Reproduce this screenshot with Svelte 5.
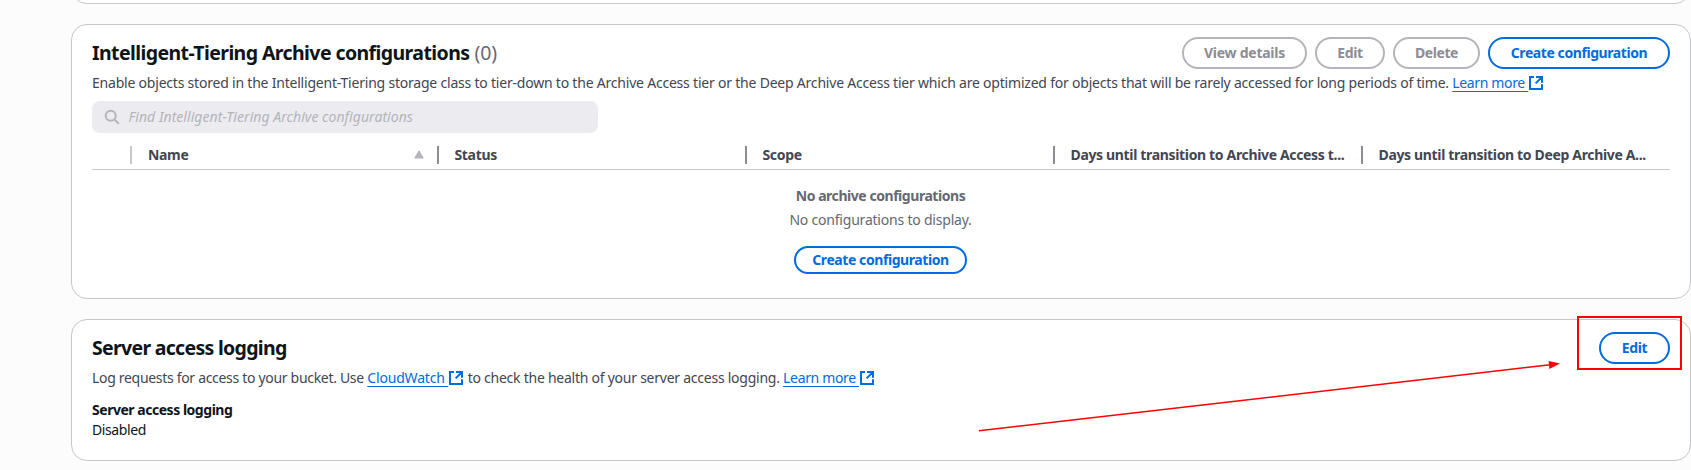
<script>
  const columns = [
    { label: 'Name', sorted: true },
    { label: 'Status' },
    { label: 'Scope' },
    { label: 'Days until transition to Archive Access t...' },
    { label: 'Days until transition to Deep Archive A...' }
  ];
</script>

{#snippet link(label, kind)}
  <a href="#top" class={kind}><span class="link-text">{label}&nbsp;</span><svg class="external" viewBox="0 0 16 16" aria-hidden="true"><path d="M8 2h6v5.7M14 2 7.6 8.4M14 9.3V14H2V2h4" /></svg></a>
{/snippet}

<main>
  <section class="card previous"></section>

  <section class="card tiering">
    <header>
      <h2><span class="title">Intelligent-Tiering Archive configurations</span> <span class="count">(0)</span></h2>
      <div class="actions">
        <button class="details" disabled>View details</button>
        <button class="edit-off" disabled>Edit</button>
        <button class="delete" disabled>Delete</button>
        <button class="create">Create configuration</button>
      </div>
    </header>
    <p class="description">Enable objects stored in the Intelligent-Tiering storage class to tier-down to the Archive Access tier or the Deep Archive Access tier which are optimized for objects that will be rarely accessed for long periods of time. {@render link('Learn more', 'learn')}</p>

    <div class="search">
      <svg viewBox="0 0 16 16" aria-hidden="true"><circle cx="6.7" cy="6.7" r="5" /><path d="m10.5 10.5 4.3 4.3" /></svg>
      <span>Find Intelligent-Tiering Archive configurations</span>
    </div>

    <div class="table-head">
      <div class="select"></div>
      {#each columns as column}
        <div class="column">
          <span>{column.label}</span>
          {#if column.sorted}
            <svg viewBox="0 0 10 9" aria-hidden="true"><path d="M5 .8 9.2 8H.8Z" /></svg>
          {/if}
        </div>
      {/each}
    </div>

    <div class="empty">
      <strong>No archive configurations</strong>
      <p>No configurations to display.</p>
      <button class="small">Create configuration</button>
    </div>
  </section>

  <section class="card logging">
    <header>
      <h2 class="logging-title">Server access logging</h2>
      <div class="actions"><button class="edit">Edit</button></div>
    </header>
    <p class="description"><span class="log">Log requests for access to your bucket. Use</span> {@render link('CloudWatch', 'watch')} <span class="check">to check the health of your server access logging.</span> {@render link('Learn more', 'learn')}</p>
    <dl>
      <dt>Server access logging</dt>
      <dd>Disabled</dd>
    </dl>
  </section>

  <svg class="annotation" viewBox="0 0 1691 470" aria-hidden="true">
    <rect x="1578" y="317" width="103" height="52" />
    <path class="line" d="M979 430.8 1550 364.8" />
    <path class="tip" d="M1560 363.6 1549.4 369 1548.6 361Z" />
  </svg>
</main>

<style>
  :global(body) {
    background: #fcfcfd;
  }
  main {
    position: relative;
    box-sizing: border-box;
    height: 470px;
    padding-left: 71px;
    overflow: hidden;
    display: flex;
    flex-direction: column;
    gap: 20px;
    font: 14px/20px "Noto Sans", "Open Sans", sans-serif;
    letter-spacing: -0.21px;
    color: #0f141a;
  }
  .card {
    box-sizing: border-box;
    flex: none;
    border: 1px solid #c6c6cd;
    border-radius: 16px;
    background: #fff;
    padding: 12px 20px 0;
  }
  .previous {
    height: 40px;
    margin-top: -36px;
  }
  .tiering {
    height: 275px;
  }
  .logging {
    height: 142px;
  }
  header {
    display: flex;
    justify-content: space-between;
    height: 32px;
  }
  h2 {
    margin: 3px 0 0;
    font-size: 19.5px;
    line-height: 25px;
    font-weight: 700;
    letter-spacing: -0.59px;
    white-space: nowrap;
  }
  .logging-title {
    letter-spacing: -0.7px;
  }
  .count {
    color: #656871;
    font-weight: 400;
    letter-spacing: -0.1px;
    margin-left: 0.5px;
  }
  .actions {
    display: flex;
    gap: 8px;
  }
  button {
    box-sizing: border-box;
    height: 32px;
    padding: 0;
    border: 2px solid #006ce0;
    border-radius: 20px;
    background: #fff;
    color: #006ce0;
    font: 700 14px/20px "Noto Sans", "Open Sans", sans-serif;
    letter-spacing: -0.42px;
    white-space: nowrap;
  }
  button:disabled {
    border-color: #b4b4bb;
    color: #8c8c94;
  }
  .details {
    width: 125px;
    letter-spacing: -0.25px;
  }
  .edit-off {
    width: 70px;
    letter-spacing: -0.3px;
  }
  .delete {
    width: 87px;
  }
  .create {
    width: 182px;
  }
  .edit {
    width: 71px;
    letter-spacing: -0.3px;
  }
  .small {
    width: 173px;
    height: 28px;
    margin-top: 16px;
  }
  p {
    margin: 0;
  }
  .description {
    margin-top: 4px;
    height: 20px;
    color: #424650;
    white-space: nowrap;
  }
  .log {
    letter-spacing: -0.31px;
  }
  .check {
    letter-spacing: -0.25px;
  }
  a {
    color: #006ce0;
    text-decoration: none;
  }
  .learn {
    letter-spacing: -0.35px;
  }
  .watch {
    letter-spacing: -0.17px;
  }
  .link-text {
    text-decoration: underline 1px;
    text-underline-offset: 3px;
    text-decoration-skip-ink: none;
  }
  .external {
    width: 16px;
    height: 16px;
    vertical-align: -3px;
    fill: none;
    stroke: currentColor;
    stroke-width: 2;
  }
  .search {
    box-sizing: border-box;
    display: flex;
    align-items: center;
    width: 506px;
    height: 32px;
    margin-top: 8px;
    padding-left: 12px;
    gap: 8.5px;
    border-radius: 8px;
    background: #ebebf0;
    color: #b4b4bb;
    font-style: italic;
    letter-spacing: 0.05px;
  }
  .search svg {
    width: 16px;
    height: 16px;
    fill: none;
    stroke: #b4b4bb;
    stroke-width: 2;
  }
  .table-head {
    box-sizing: border-box;
    display: grid;
    grid-template-columns: 38px repeat(5, minmax(0, 1fr));
    align-items: center;
    height: 37px;
    padding-top: 8px;
    padding-bottom: 1px;
    border-bottom: 1px solid #c6c6cd;
  }
  .column {
    position: relative;
    display: flex;
    align-items: center;
    justify-content: space-between;
    height: 20px;
    padding: 0 23px 0 16.5px;
    color: #424650;
    font-weight: 700;
    letter-spacing: -0.34px;
    white-space: nowrap;
  }
  .column::before {
    content: "";
    position: absolute;
    left: -1px;
    top: 1px;
    width: 2px;
    height: 18px;
    background: #8c8c94;
  }
  .select + .column {
    padding-left: 18px;
  }
  .select + .column::before {
    left: 0;
    background: #c6c6cd;
  }
  .column svg {
    width: 10px;
    height: 9px;
    margin-right: -9px;
    fill: #b4b4bb;
    stroke: #b4b4bb;
    stroke-linejoin: round;
  }
  .empty {
    display: flex;
    flex-direction: column;
    align-items: center;
    padding: 16px 1px 0 0;
    color: #656871;
  }
  .empty strong {
    font-weight: 700;
    letter-spacing: -0.45px;
  }
  .empty p {
    margin-top: 4px;
  }
  dl {
    margin: 12px 0 0;
  }
  dt {
    font-weight: 700;
    letter-spacing: -0.47px;
  }
  dd {
    margin: 0;
    letter-spacing: -0.4px;
  }
  .annotation {
    position: absolute;
    left: 0;
    top: 0;
    width: 1691px;
    height: 470px;
    pointer-events: none;
  }
  .annotation rect {
    fill: none;
    stroke: #f00;
    stroke-width: 2;
  }
  .line {
    stroke: #f00;
    stroke-width: 1.5;
  }
  .tip {
    fill: #f00;
  }
</style>
